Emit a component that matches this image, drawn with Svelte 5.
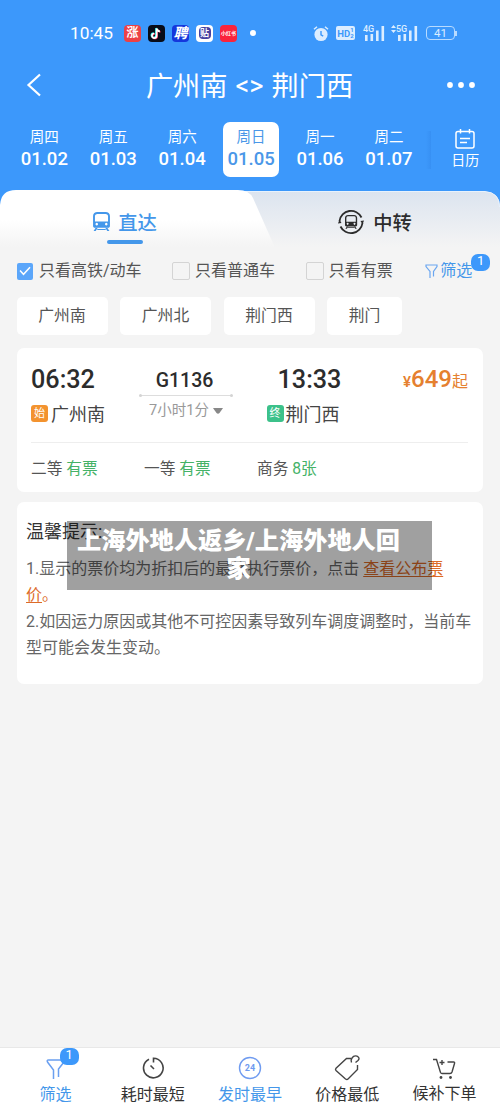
<script lang="ts">
  type Day = { week: string; date: string };

  const days: Day[] = [
    { week: '周四', date: '01.02' },
    { week: '周五', date: '01.03' },
    { week: '周六', date: '01.04' },
    { week: '周日', date: '01.05' },
    { week: '周一', date: '01.06' },
    { week: '周二', date: '01.07' },
  ];
  const stations = ['广州南', '广州北', '荆门西', '荆门'];
  const seats = [
    { name: '二等', left: '有票' },
    { name: '一等', left: '有票' },
    { name: '商务', left: '8张' },
  ];
  const sorts = [
    { id: 'filter', label: '筛选' },
    { id: 'fastest', label: '耗时最短' },
    { id: 'earliest', label: '发时最早' },
    { id: 'cheapest', label: '价格最低' },
    { id: 'waitlist', label: '候补下单' },
  ];

  let activeDate = $state('01.05');
  let highSpeed = $state(true);
  let normal = $state(false);
  let available = $state(false);
  let sortBy = $state('earliest');
</script>

{#snippet train()}
  <path fill-rule="evenodd" d="M4 0h8c2.2 0 4 1.6 4 3.7v9.6c0 1-.8 1.7-1.7 1.7H1.7c-.9 0-1.7-.7-1.7-1.7V3.7C0 1.6 1.8 0 4 0zM1.8 3.600v5.400h12.400v-5.400q-.4-1.800-2.200-1.800h-8q-1.800 0-2.200 1.800zM3.500 10.300a1.200 1.200 0 1 0 .01 0zM12.500 10.300a1.200 1.200 0 1 0 .01 0z" />
  <path d="M2.500 15h2l-2 3H.5zM11.500 15h2l2 3h-2zM4 16h8v1H4z" />
{/snippet}

{#snippet checkbox(checked: boolean)}
  <span class="box" class:checked>
    {#if checked}
      <svg width="12" height="10" viewBox="0 0 12 10"><path d="M1 4.5l3.5 3.8L11 1.2" fill="none" stroke="#fff" stroke-width="1.5" /></svg>
    {/if}
  </span>
{/snippet}

<div class="page">
  <header>
    <div class="status">
      <span class="clock">10:45</span>
      <div class="apps">
        <span class="app red">涨</span>
        <span class="app black">
          <svg width="17" height="17" viewBox="0 0 17 17" fill="none" stroke-width="1.7">
            <path d="M8.600 3.500v7.300a2.300 2.300 0 1 1-2.300-2.300M8.600 3.500c.3 1.800 1.500 2.800 3.300 2.900" stroke="#25f4ee" transform="translate(-.6 -.5)" />
            <path d="M8.600 3.500v7.300a2.300 2.300 0 1 1-2.300-2.300M8.600 3.500c.3 1.800 1.500 2.800 3.300 2.900" stroke="#fe2c55" transform="translate(.5 .4)" />
            <path d="M8.600 3.500v7.300a2.300 2.300 0 1 1-2.300-2.300M8.600 3.500c.3 1.800 1.500 2.800 3.300 2.900" stroke="#fff" />
          </svg>
        </span>
        <span class="app blue">聘</span>
        <span class="app white"><i>贴</i></span>
        <span class="app rednote">小红书</span>
      </div>
      <span class="more-apps"></span>
      <svg class="alarm" width="16" height="17" viewBox="0 0 16 17">
        <circle cx="8" cy="9.5" r="6.6" fill="#dcedff" />
        <path d="M1 4.3L4 1.7M15 4.3L12 1.7" stroke="#dcedff" stroke-width="1.5" />
        <path d="M8 6v3.900l2.200 1.300" fill="none" stroke="#3c98fb" stroke-width="1.4" />
      </svg>
      <span class="hd">HD<small>1<br />2</small></span>
      <div class="signal">
        <span>4G</span>
        <svg width="22" height="15" viewBox="0 0 22 15" fill="#dcedff"><path d="M2 9h2.6v6H2zM7.5 8h2.6v7H7.5zM13 4.5h2.6V15H13zM18.5 0h2.6v15h-2.6z" /></svg>
      </div>
      <svg class="updown" width="5" height="8" viewBox="0 0 5 8" fill="#dcedff"><path d="M2.5 0L5 3H0zM2.5 8L5 5H0z" /></svg>
      <div class="signal">
        <span>5G</span>
        <svg width="22" height="15" viewBox="0 0 22 15" fill="#dcedff"><path d="M2 9h2.6v6H2zM7.5 8h2.6v7H7.5zM13 4.5h2.6V15H13zM18.5 0h2.6v15h-2.6z" /></svg>
      </div>
      <span class="battery">41</span>
      <span class="battery-cap"></span>
    </div>

    <div class="nav">
      <svg width="16" height="24" viewBox="0 0 16 24"><path d="M14 1.5L2.5 12L14 22.5" fill="none" stroke="#fff" stroke-width="2.2" /></svg>
      <h1><span>广州南</span><span class="swap">&lt;&gt;</span><span>荆门西</span></h1>
      <svg width="30" height="8" viewBox="0 0 30 8" fill="#fff"><circle cx="4" cy="4" r="2.9" /><circle cx="15" cy="4" r="2.9" /><circle cx="26" cy="4" r="2.9" /></svg>
    </div>

    <div class="dates">
      {#each days as day}
        <button class="day" class:active={day.date === activeDate} onclick={() => (activeDate = day.date)}>
          <span class="week">{day.week}</span>
          <span class="date">{day.date}</span>
        </button>
      {/each}
      <span class="edge"></span>
      <div class="calendar">
        <svg width="20" height="20" viewBox="0 0 20 20" fill="none" stroke="#fff" stroke-width="1.5">
          <rect x="1" y="2.500" width="18" height="16.500" rx="2" />
          <path d="M5.500 0v4.500M14.500 0v4.500M5 9.500h10M5 13.500h7" />
        </svg>
        <span>日历</span>
      </div>
    </div>
  </header>

  <div class="tabs">
    <svg class="tabs-bg" width="500" height="60" viewBox="0 0 500 60">
      <defs>
        <linearGradient id="on" x1="0" y1="0" x2="0" y2="1">
          <stop offset="0.5" stop-color="#fff" />
          <stop offset="0.95" stop-color="#f4f4f4" />
        </linearGradient>
        <linearGradient id="off" x1="0" y1="0" x2="0" y2="1">
          <stop offset="0" stop-color="#dce4ef" />
          <stop offset="0.95" stop-color="#f4f4f4" />
        </linearGradient>
      </defs>
      <rect y="30" width="500" height="30" fill="#f4f4f4" />
      <path d="M230 1.5H485Q500 2.5 500 17V60H230z" fill="url(#off)" />
      <path d="M230 1.5H485Q499.5 2.5 499.5 17" fill="none" stroke="#e8f2fd" />
      <path d="M0 60V15Q1 0 16 0H238Q249 0 253 8L276 60z" fill="url(#on)" />
    </svg>
    <div class="tab active">
      <svg width="17" height="19" viewBox="0 0 16 18" fill="#4497ea">{@render train()}</svg>
      <span>直达</span>
    </div>
    <div class="tab">
      <svg width="26" height="26" viewBox="0 0 26 26" fill="#2c2c2c">
        <path d="M1.500 12A11.600 11.600 0 0 1 23.500 8.500M24.500 14A11.600 11.600 0 0 1 2.500 17.500" fill="none" stroke="#2c2c2c" stroke-width="1.8" />
        <path d="M0 14.500l1.500-4 2 3.500zM26 11.500l-1.500 4-2-3.500z" />
        <g transform="translate(7 6) scale(.76)">{@render train()}</g>
      </svg>
      <span>中转</span>
    </div>
  </div>

  <div class="filters">
    <button class="check" onclick={() => (highSpeed = !highSpeed)}>{@render checkbox(highSpeed)}只看高铁/动车</button>
    <button class="check" onclick={() => (normal = !normal)}>{@render checkbox(normal)}只看普通车</button>
    <button class="check" onclick={() => (available = !available)}>{@render checkbox(available)}只看有票</button>
    <div class="filter">
      <svg width="13" height="15" viewBox="0 0 13 15" fill="none" stroke="#6aa6f0" stroke-width="1.2"><path d="M5 14V7.500L1 2.500V1H12V2.500L8.500 7.500V12.500" /></svg>
      筛选
      <span class="count">1</span>
    </div>
  </div>

  <div class="stations">
    {#each stations as name}
      <span class="chip">{name}</span>
    {/each}
  </div>

  <section class="card trip">
    <div class="trip-main">
      <div class="stop">
        <span class="time">06:32</span>
        <span class="station"><i class="tag start">始</i>广州南</span>
      </div>
      <div class="middle">
        <span class="number">G1136</span>
        <span class="track"></span>
        <span class="duration">7小时1分 <svg width="10" height="6" viewBox="0 0 10 6"><path d="M0 0h10L6.5 5q-1.5 1.5-3 0z" fill="#888" /></svg></span>
      </div>
      <div class="stop arrive">
        <span class="time">13:33</span>
        <span class="station"><i class="tag end">终</i>荆门西</span>
      </div>
      <div class="price"><small>¥</small><b>649</b><span>起</span></div>
    </div>
    <div class="seats">
      {#each seats as seat}
        <span class="seat">{seat.name} <em>{seat.left}</em></span>
      {/each}
    </div>
  </section>

  <section class="card notice">
    <h2>温馨提示:</h2>
    <p>1.显示的票价均为折扣后的最终执行票价，点击 <a href="#price">查看公布票<br />价</a><span class="stop-mark">。</span></p>
    <p>2.如因运力原因或其他不可控因素导致列车调度调整时，当前车型可能会发生变动。</p>
    <div class="caption">上海外地人返乡/上海外地人回<br />家</div>
  </section>

  <footer>
    {#each sorts as sort}
      <button class="sort {sort.id}" class:active={sort.id === sortBy || sort.id === 'filter'} onclick={() => (sortBy = sort.id)}>
        <span class="glyph">
          {#if sort.id === 'filter'}
            <svg width="20" height="22" viewBox="0 0 20 22" fill="none" stroke="#6a9ff0" stroke-width="1.5"><path d="M7.500 21V12L1.500 4Q.5 2 2.500 2H17.500Q19 2 18 4L12.500 11V19" /></svg>
            <span class="count">1</span>
          {:else if sort.id === 'fastest'}
            <svg width="24" height="24" viewBox="0 0 24 24" fill="none" stroke="#444" stroke-width="1.6"><path d="M8 3.200A9.800 9.800 0 1 0 12.500 2.200V6.500M9.500 9.500l3.500 3.500" /></svg>
          {:else if sort.id === 'earliest'}
            <svg width="24" height="24" viewBox="0 0 24 24">
              <circle cx="12" cy="12" r="10.5" fill="none" stroke="#6f9bf0" stroke-width="1.4" />
              <text x="12" y="15.2" text-anchor="middle" font-size="9" font-weight="700" fill="#6f9bf0">24</text>
            </svg>
          {:else if sort.id === 'cheapest'}
            <svg width="27" height="27" viewBox="0 0 27 27" fill="none" stroke="#444" stroke-width="1.4">
              <path d="M17 4.500H12.500L2 14.300Q1 15.500 2 16.500L11.500 25Q13 26 14 25L23.500 15.500V11" />
              <path d="M17.500 8.500Q16.500 6 18 4Q20 1 23 2.200Q26.500 4 24 6.500L21.500 8.500" />
            </svg>
          {:else}
            <svg width="24" height="22" viewBox="0 0 24 22" fill="none" stroke="#444" stroke-width="1.4">
              <path d="M1 1.500H4.500L8.500 14.500Q9 15.500 10 15.500H18Q19.500 15.500 20 14L22.500 5.500Q23 4 21.500 4H15.500M7.500 4.500H12.500M10 2V7" />
              <g fill="#444" stroke="none"><circle cx="9" cy="19.5" r="1.4" /><circle cx="18.5" cy="19.5" r="1.4" /></g>
            </svg>
          {/if}
        </span>
        <span class="label">{sort.label}</span>
      </button>
    {/each}
  </footer>
</div>

<style>
  :global(body) {
    margin: 0;
    background: #f4f4f4;
  }

  .page {
    --blue: #3c98fb;
    width: 500px;
    height: 1111px;
    display: flex;
    flex-direction: column;
    overflow: hidden;
    background: linear-gradient(var(--blue) 230px, #f4f4f4 230px);
    font-family: Roboto, 'Noto Sans CJK SC', sans-serif;
    font-size: 16px;
    color: #555;
  }

  svg {
    display: block;
    flex: none;
  }

  button {
    border: 0;
    padding: 0;
    background: none;
    font: inherit;
    color: inherit;
  }

  i,
  em {
    font-style: normal;
  }

  header {
    height: 190px;
    flex: none;
    color: #fff;
  }

  /* status bar */
  .status {
    display: flex;
    align-items: center;
    height: 50px;
    padding: 16px 0 0 70px;
    box-sizing: border-box;
    color: #dcedff;
  }

  .clock {
    width: 54px;
    font-size: 17.3px;
    color: #fff;
  }

  .apps {
    display: flex;
    gap: 7px;
  }

  .app {
    width: 17px;
    height: 17px;
    border-radius: 4px;
    overflow: hidden;
    display: flex;
    align-items: center;
    justify-content: center;
    color: #fff;
    font-size: 12px;
    font-weight: 700;
    line-height: 17px;
    white-space: nowrap;
  }

  .red {
    background: #ed4145;
  }

  .black {
    background: #080c18;
  }

  .blue {
    background: #1537dc;
    font-size: 14px;
    font-style: italic;
  }

  .white {
    background: #fff;
  }

  .white i {
    width: 12px;
    height: 12px;
    border-radius: 4px;
    background: #4640a0;
    font-size: 9px;
    line-height: 12px;
    text-align: center;
  }

  .rednote {
    background: #fa243c;
    font-size: 5px;
  }

  .more-apps {
    width: 6px;
    height: 6px;
    margin: 0 57px 0 13px;
    border-radius: 50%;
    background: #fff;
  }

  .hd {
    display: flex;
    align-items: center;
    justify-content: center;
    width: 19px;
    height: 14px;
    margin: 0 9px 0 7px;
    border-radius: 2px;
    background: #dcedff;
    color: var(--blue);
    font-size: 9.5px;
    font-weight: 700;
  }

  .hd small {
    font-size: 6px;
    line-height: 6px;
  }

  .signal {
    position: relative;
    width: 21px;
  }

  .signal svg {
    margin-left: -1px;
  }

  .signal span {
    position: absolute;
    top: -2px;
    left: -1px;
    font-size: 9px;
    line-height: 10px;
    font-weight: 500;
  }

  .updown {
    margin: -9px 1px 0 6px;
  }

  .battery {
    width: 27px;
    height: 12px;
    margin-left: 8px;
    border: 1px solid #b8dbff;
    border-radius: 4px;
    font-size: 11.5px;
    line-height: 13px;
    text-align: center;
  }

  .battery-cap {
    width: 1.5px;
    height: 5px;
    background: #b8dbff;
  }

  .nav {
    display: flex;
    align-items: center;
    justify-content: space-between;
    height: 72px;
    padding: 0 24px 3px 26px;
    box-sizing: border-box;
  }

  h1 {
    display: flex;
    gap: 8px;
    margin: 5px 0 0 11px;
    font-size: 27.2px;
    font-weight: 400;
    line-height: 36px;
  }

  .swap {
    margin-top: -1px;
  }

  .dates {
    display: flex;
    align-items: center;
    padding-left: 16px;
  }

  .day {
    display: flex;
    flex-direction: column;
    align-items: center;
    width: 57px;
    height: 55px;
    margin-right: 12.3px;
    padding-top: 5px;
    box-sizing: border-box;
    border-radius: 7px;
  }

  .day.active {
    background: #fff;
    color: #4a97e8;
  }

  .week {
    font-size: 14.5px;
    line-height: 21px;
  }

  .date {
    font-size: 18.5px;
    font-weight: 500;
    line-height: 22px;
  }

  .edge {
    width: 5px;
    height: 38px;
    margin-left: -4px;
    background: linear-gradient(90deg, rgba(40, 120, 220, 0), rgba(40, 120, 220, 0.25));
  }

  .calendar {
    display: flex;
    flex-direction: column;
    align-items: center;
    width: 70px;
    font-size: 14px;
    line-height: 22px;
  }

  /* tabs */
  .tabs {
    position: relative;
    display: flex;
    height: 60px;
    flex: none;
  }

  .tabs-bg {
    position: absolute;
    inset: 0;
  }

  .tab {
    position: relative;
    display: flex;
    align-items: center;
    justify-content: center;
    gap: 9px;
    width: 250px;
    height: 63px;
    font-size: 19.3px;
    font-weight: 500;
    color: #2c2c2c;
  }

  .tab.active {
    gap: 8px;
    color: #4497ea;
  }

  .tab.active::after {
    content: '';
    position: absolute;
    left: 107px;
    top: 50px;
    width: 36px;
    height: 4px;
    border-radius: 2px;
    background: #4497ea;
  }

  /* filters */
  .filters {
    display: flex;
    align-items: center;
    height: 42px;
    flex: none;
    padding-left: 17px;
    line-height: 20px;
  }

  .check {
    display: flex;
    align-items: center;
    gap: 6px;
    margin-right: 30.5px;
    white-space: nowrap;
  }

  .check + .check {
    gap: 5px;
  }

  .box {
    display: flex;
    align-items: center;
    justify-content: center;
    width: 16px;
    height: 16px;
    border: 1px solid #d4d4d4;
    border-radius: 2px;
  }

  .box.checked {
    border: 0;
    height: 17px;
    background: #5ba6fa;
  }

  .filter {
    position: relative;
    display: flex;
    align-items: center;
    gap: 2px;
    margin-left: 2px;
    color: #4497ea;
  }

  .count {
    position: absolute;
    left: 46px;
    top: -7px;
    width: 19px;
    height: 17px;
    border-radius: 7px;
    background: var(--blue);
    color: #fff;
    font-size: 13px;
    line-height: 14px;
    text-align: center;
  }

  .stations {
    display: flex;
    gap: 12.5px;
    padding: 5px 16.5px 13px;
  }

  .chip {
    padding: 0 21.8px;
    height: 38px;
    border-radius: 5px;
    background: #fff;
    font-size: 15.8px;
    line-height: 38px;
  }

  .card {
    margin: 0 17px 10px;
    border-radius: 7px;
    background: #fff;
    box-sizing: border-box;
    flex: none;
  }

  /* trip card */
  .trip {
    height: 144px;
    padding: 0 15px 0 14px;
  }

  .trip-main {
    display: flex;
    height: 95px;
    padding-top: 16px;
    box-sizing: border-box;
    border-bottom: 1px solid #eee;
  }

  .stop {
    width: 108px;
  }

  .time {
    display: block;
    font-size: 25.2px;
    font-weight: 500;
    line-height: 32px;
    color: #2c2c2c;
  }

  .station {
    display: flex;
    align-items: center;
    gap: 3px;
    margin-top: 4px;
    font-size: 18px;
    line-height: 29px;
    color: #444;
  }

  .tag {
    width: 17px;
    height: 17px;
    margin-top: -2px;
    border-radius: 3px;
    color: #fff;
    font-size: 11px;
    line-height: 17px;
    text-align: center;
  }

  .start {
    background: #f3932f;
  }

  .end {
    background: #3cc18a;
  }

  .middle {
    display: flex;
    flex-direction: column;
    align-items: center;
    width: 94px;
  }

  .number {
    margin-right: 3px;
    font-size: 19.5px;
    font-weight: 500;
    line-height: 33px;
    height: 29px;
    color: #2c2c2c;
  }

  .track {
    position: relative;
    width: 92px;
    height: 1px;
    margin-top: 2px;
    background: #ddd;
  }

  .track::before,
  .track::after {
    content: '';
    position: absolute;
    top: -1px;
    left: -1px;
    width: 3px;
    height: 3px;
    border-radius: 50%;
    background: #d4d4d4;
  }

  .track::after {
    left: auto;
    right: -1px;
  }

  .duration {
    display: flex;
    align-items: center;
    gap: 4px;
    font-size: 14.5px;
    line-height: 30px;
    color: #999;
  }

  .arrive {
    margin-left: 33.5px;
    width: 84px;
  }

  .arrive .station {
    gap: 2px;
  }

  .arrive .time {
    padding-left: 11px;
  }

  .price {
    margin-left: auto;
    height: 32px;
    line-height: 31px;
    color: #e5802f;
    white-space: nowrap;
  }

  .price small {
    font-size: 15px;
    font-weight: 500;
  }

  .price b {
    font-size: 24px;
    font-weight: 500;
  }

  .price span {
    font-size: 16px;
  }

  .seats {
    display: flex;
    line-height: 51px;
  }

  .seat {
    width: 113px;
    font-size: 15.7px;
  }

  .seat em {
    color: #45b267;
  }

  /* notice */
  .notice {
    position: relative;
    height: 182px;
    padding: 16px 10px 0 9px;
  }

  h2 {
    margin: 0 0 10px;
    font-size: 18px;
    font-weight: 400;
    line-height: 28px;
    color: #333;
  }

  p {
    margin: 0;
    line-height: 26.3px;
    color: #666;
  }

  a,
  .stop-mark {
    color: #dd6b29;
  }

  a {
    text-underline-offset: 2px;
  }

  .caption {
    position: absolute;
    left: 50px;
    top: 19px;
    width: 365px;
    height: 69px;
    padding: 6px 22px 0 0;
    box-sizing: border-box;
    background: rgba(0, 0, 0, 0.373);
    color: #fff;
    font-size: 24.2px;
    font-weight: 900;
    line-height: 28px;
    text-align: center;
    white-space: nowrap;
  }

  /* sort bar */
  footer {
    display: flex;
    height: 64px;
    flex: none;
    margin-top: auto;
    padding: 0 7px;
    box-sizing: border-box;
    border-top: 1px solid #e8e8e8;
    background: #fff;
    color: #333;
  }

  .sort {
    flex: 1;
    display: flex;
    flex-direction: column;
    align-items: center;
  }

  .sort.active {
    color: #4497ea;
  }

  .glyph {
    position: relative;
    display: flex;
    align-items: center;
    height: 36px;
    padding-top: 3px;
    box-sizing: border-box;
  }

  .sort .count {
    left: 14px;
    top: 0;
  }

  .label {
    line-height: 22px;
  }

  .sort.filter {
    margin: 0;
  }

  .sort.filter .glyph {
    height: 34px;
    padding-top: 8px;
  }

  .sort.waitlist .glyph {
    height: 35px;
    padding-top: 7px;
  }
</style>
